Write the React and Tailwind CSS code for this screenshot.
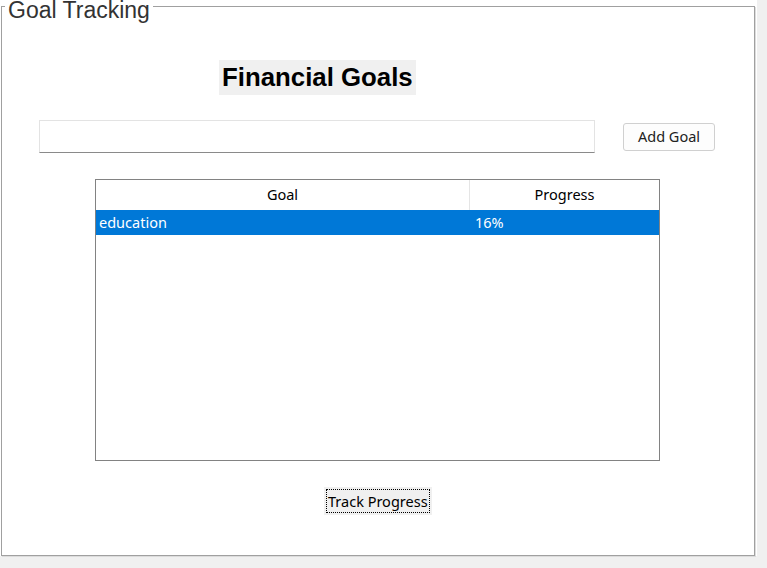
const UI = { fontFamily: '"Noto Sans", "Open Sans", sans-serif' }
const ARIAL = { fontFamily: '"Liberation Sans", Arial, sans-serif' }

const goals = [{ name: 'education', progress: '16%' }]

function GoalTable() {
  return (
    <div className="ml-[93px] mt-[26px] flex h-[282px] w-[565px] flex-col border border-[#828282] bg-white" style={UI}>
      <div className="flex h-[30px] shrink-0 text-[14.5px] text-black">
        <div className="flex w-[374px] items-center justify-center border-r border-[#e5e5e5]">Goal</div>
        <div className="flex flex-1 items-center justify-center">Progress</div>
      </div>
      {goals.map((g) => (
        <div key={g.name} className="flex h-[25px] items-center bg-[#0078d7] text-[14.5px] text-white">
          <div className="w-[375px] pl-[3px]">{g.name}</div>
          <div className="flex-1 pl-[4px]">{g.progress}</div>
        </div>
      ))}
    </div>
  )
}

export default function App() {
  return (
    <div className="h-[568px] w-[767px] overflow-hidden bg-[#f0f0f0]">
      <div className="h-[556px] w-[757px] bg-white pl-[1px] pr-[2px] pt-[6px]">
        <div className="relative h-[550px] w-[754px] border border-[#a0a0a0] shadow-[1px_1px_0_#dcdcdc]">
          <span
            className="absolute left-[3px] top-[-7px] bg-white px-[3px] text-[23px] leading-[20px] text-[#333]"
            style={ARIAL}
          >
            Goal Tracking
          </span>

          <div className="ml-[217px] mt-[53px] inline-block h-[35px] bg-[#f0f0f0] px-[3px] text-[25.8px] font-bold leading-[35px] text-black" style={ARIAL}>
            Financial Goals
          </div>

          <div className="ml-[37px] mt-[25px] flex items-center gap-[28px]">
            <input
              className="h-[33px] w-[556px] border border-[#e3e3e3] border-b-[#8a8a8a] bg-white px-1 text-[14px] outline-none"
              style={UI}
            />
            <button
              className="h-[28px] w-[92px] rounded-[3px] border border-[#d0d0d0] bg-[#fdfdfd] text-[14.5px] text-[#222]"
              style={UI}
            >
              Add Goal
            </button>
          </div>

          <GoalTable />

          <button className="ml-[322px] mt-[26px] block bg-[#f0f0f0] p-[2px]" style={UI}>
            <span className="block border border-dotted border-black px-[1px] text-[14.5px] leading-[22px] text-black">
              Track Progress
            </span>
          </button>
        </div>
      </div>
    </div>
  )
}
